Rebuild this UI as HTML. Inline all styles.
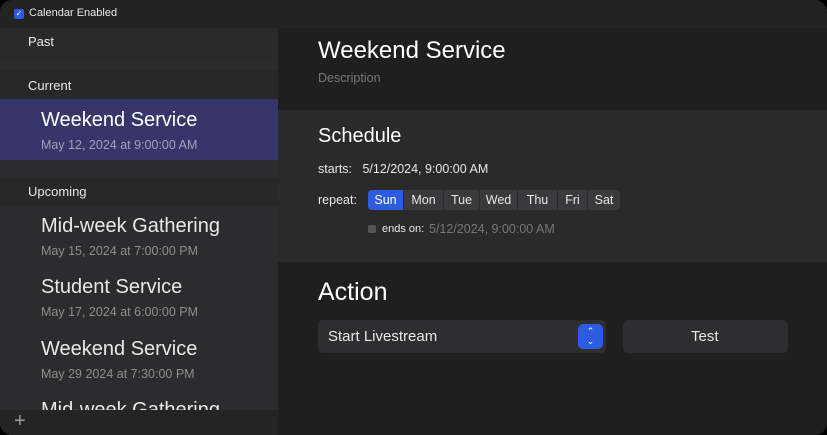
<!DOCTYPE html>
<html><head><style>
body{margin:0;width:827px;height:435px;background:#000;font-family:"Liberation Sans",sans-serif;overflow:hidden}
.win{position:absolute;left:0;top:0;width:827px;height:435px;border-radius:12px;background:#1f1f1f;overflow:hidden}
.top{position:absolute;left:0;top:0;width:827px;height:28px;background:#232323}
.cb{position:absolute;left:14px;top:9px;width:10px;height:10px;border-radius:2px;background:#2e5ce0;color:#fff;font-size:8px;line-height:10px;text-align:center}
.t{position:absolute;color:#e8e8e8;white-space:nowrap}
.side{position:absolute;left:0;top:28px;width:278px;height:407px;background:#2c2c2e}
.band{position:absolute;left:0;width:278px}
.sel{position:absolute;left:0;top:99px;width:278px;height:61px;background:#36366a}
.bot{position:absolute;left:0;top:410px;width:278px;height:25px;background:#242424}
.sched{position:absolute;left:278px;top:110px;width:549px;height:152px;background:#2a2a2a}
.days{position:absolute;left:368px;top:190px;height:20px;display:flex;background:#3a3a3c;border-radius:4px;overflow:hidden}
.days div{color:#e6e6e6;font-size:12.5px;line-height:20px;text-align:center;box-sizing:border-box;border-right:1px solid #2a2a2a}
.btn{position:absolute;background:#2e2e30;border-radius:5px}
</style></head><body><div class="win">
<div class="top"></div><div class="cb">✓</div>
<div class="t" style="left:29px;top:7px;font-size:11px">Calendar Enabled</div>
<div class="side"></div>
<div class="band" style="top:28px;height:34px;background:#2a2a2a"></div>
<div class="band" style="top:70px;height:29px;background:#282828"></div>
<div class="band" style="top:178px;height:28px;background:#282828"></div>
<div class="t" style="left:28px;top:34px;font-size:13px">Past</div>
<div class="t" style="left:28px;top:78px;font-size:13px">Current</div>
<div class="sel"></div>
<div class="t" style="left:41px;top:109px;font-size:20px;color:#fff">Weekend Service</div>
<div class="t" style="left:41px;top:138px;font-size:12.5px;color:#a0a0b8">May 12, 2024 at 9:00:00 AM</div>
<div class="t" style="left:28px;top:184px;font-size:13px">Upcoming</div>
<div class="t" style="left:41px;top:215px;font-size:20px">Mid-week Gathering</div>
<div class="t" style="left:41px;top:244px;font-size:12.5px;color:#8e8e8e">May 15, 2024 at 7:00:00 PM</div>
<div class="t" style="left:41px;top:276px;font-size:20px">Student Service</div>
<div class="t" style="left:41px;top:305px;font-size:12.5px;color:#8e8e8e">May 17, 2024 at 6:00:00 PM</div>
<div class="t" style="left:41px;top:338px;font-size:20px">Weekend Service</div>
<div class="t" style="left:41px;top:367px;font-size:12.5px;color:#8e8e8e">May 29 2024 at 7:30:00 PM</div>
<div class="t" style="left:41px;top:399px;font-size:20px;height:11px;overflow:hidden">Mid-week Gathering</div>
<div class="bot"></div>
<div class="t" style="left:14px;top:410px;font-size:20px;color:#999;font-weight:300">+</div>
<div class="t" style="left:318px;top:37px;font-size:24px;color:#fff">Weekend Service</div>
<div class="t" style="left:318px;top:71px;font-size:12.5px;color:#777">Description</div>
<div class="sched"></div>
<div class="t" style="left:318px;top:125px;font-size:20px;color:#fff">Schedule</div>
<div class="t" style="left:318px;top:162px;font-size:12.5px">starts:&nbsp;&nbsp; 5/12/2024, 9:00:00 AM</div>
<div class="t" style="left:318px;top:193px;font-size:12.5px">repeat:</div>
<div class="days"><div style="width:36px;background:#2e5ce0;color:#fff">Sun</div><div style="width:40px">Mon</div><div style="width:36px">Tue</div><div style="width:38px">Wed</div><div style="width:40px">Thu</div><div style="width:30px">Fri</div><div style="width:32px;border:0">Sat</div></div>
<div style="position:absolute;left:368px;top:225px;width:8px;height:8px;border-radius:2px;background:#555"></div>
<div class="t" style="left:382px;top:223px;font-size:11px">ends on:</div>
<div class="t" style="left:429px;top:222px;font-size:12.5px;color:#777">5/12/2024, 9:00:00 AM</div>
<div class="t" style="left:318px;top:278px;font-size:25px;color:#fff">Action</div>
<div class="btn" style="left:318px;top:320px;width:288px;height:33px"></div>
<div class="t" style="left:328px;top:328px;font-size:15px">Start Livestream</div>
<div style="position:absolute;left:578px;top:324px;width:25px;height:25px;border-radius:5px;background:#2e5ce0;color:#fff;font-size:9px;line-height:10px;text-align:center;padding-top:2px;box-sizing:border-box">⌃<br>⌄</div>
<div class="btn" style="left:623px;top:320px;width:165px;height:33px"></div>
<div class="t" style="left:691px;top:328px;font-size:15px">Test</div>
</div></body></html>
